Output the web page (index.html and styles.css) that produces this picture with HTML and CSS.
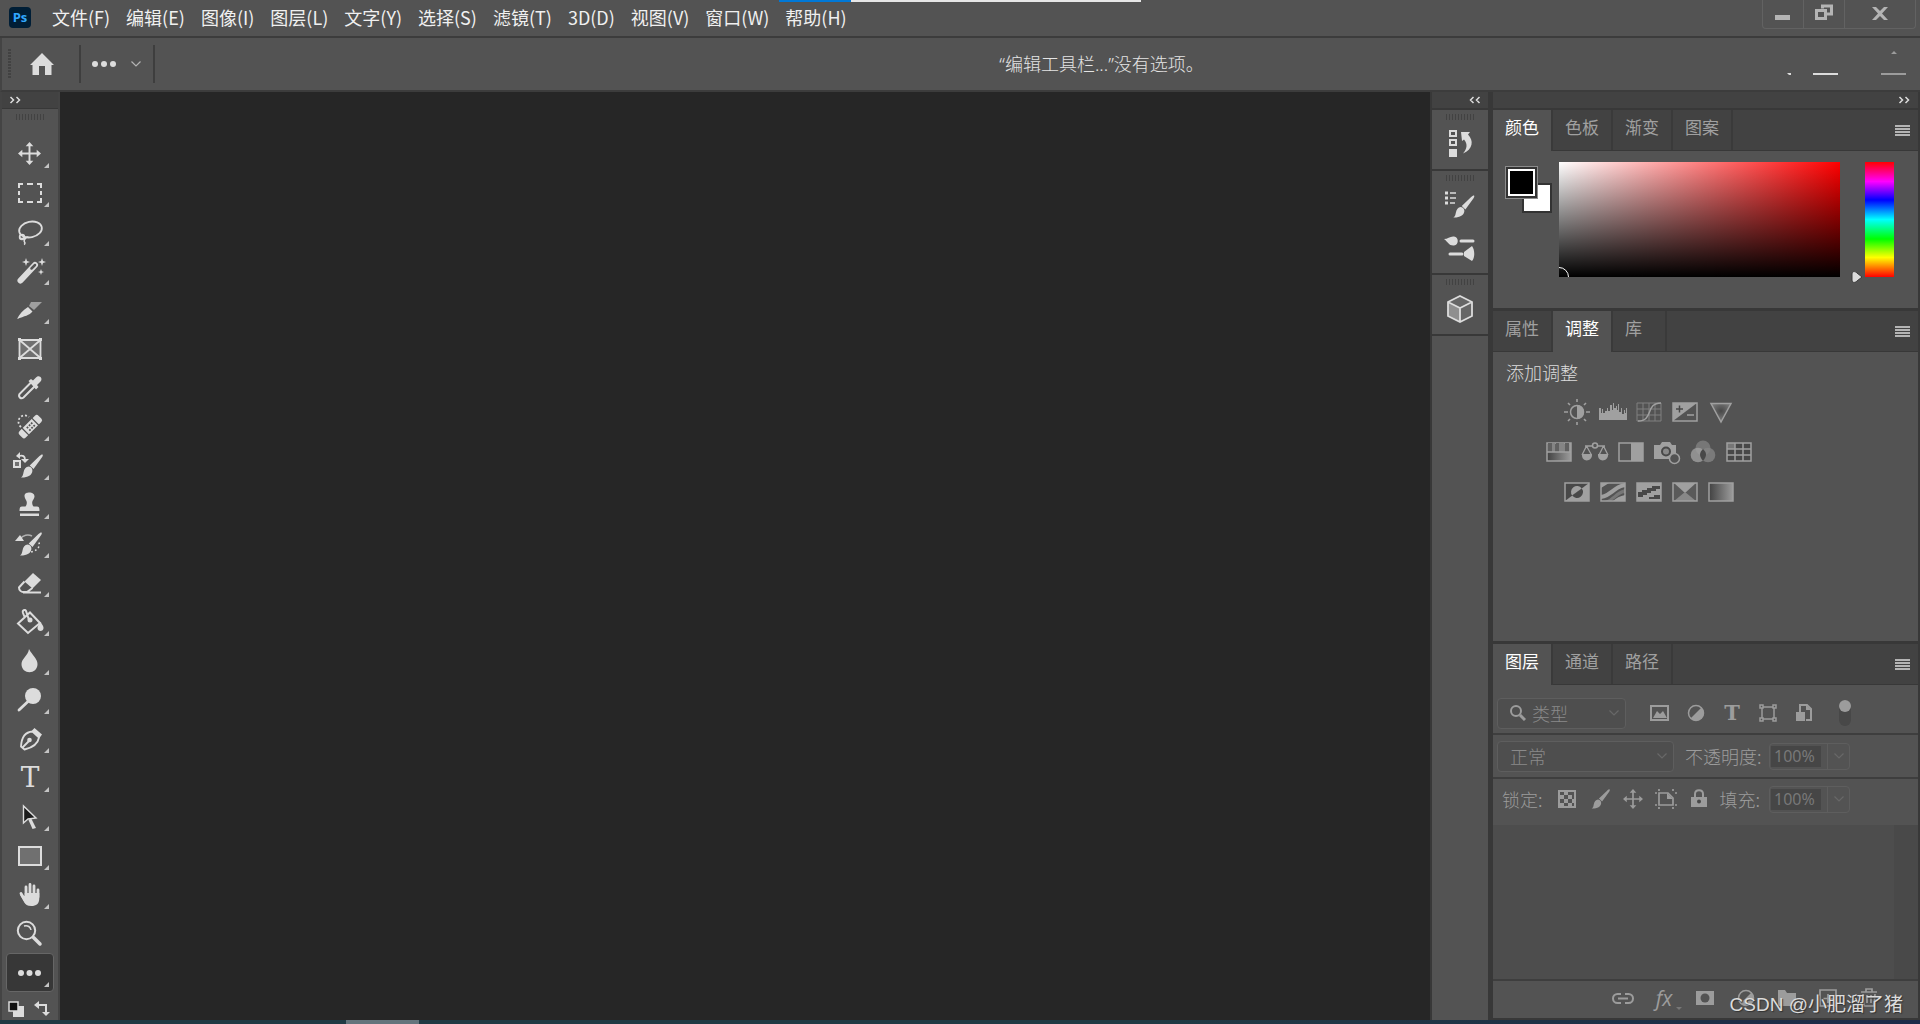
FILE: index.html
```html
<!DOCTYPE html>
<html lang="zh-CN">
<head>
    <meta charset="UTF-8">
    <meta name="viewport" content="width=device-width, initial-scale=1.0">
    <title>Photoshop</title>
    <link rel="stylesheet" href="styles.css">
</head>
<body>
    <!-- shared icons -->
    <svg class="defs" aria-hidden="true">
        <defs>
            <linearGradient id="fade"><stop offset="0" stop-color="#424242"/><stop offset="1" stop-color="#9c9c9c"/></linearGradient>
            <radialGradient id="spot" cy=".4"><stop offset="0" stop-color="#474747"/><stop offset="1" stop-color="#777"/></radialGradient>
        </defs>
        <symbol id="chevron" viewBox="0 0 12 8"><path d="M1.500 1.500L6 6l4.500-4.500" fill="none" stroke="currentColor" stroke-width="1.200"/></symbol>
        <symbol id="double" viewBox="0 0 12 8"><path d="M1.500 1L4.500 4l-3 3M7.500 1l3 3-3 3" fill="none" stroke="currentColor" stroke-width="1.500"/></symbol>
        <symbol id="menu" viewBox="0 0 16 12"><path d="M0 1h15M0 4h15M0 7h15M0 10h15" stroke="currentColor" stroke-width="2"/></symbol>
        <symbol id="move" viewBox="0 0 24 24"><path d="M12 3v18M3 12h18" stroke="currentColor" stroke-width="2"/><path d="M12 0l4 4.500H8zM12 24l4-4.500H8zM0 12l4.500-4v8zM24 12l-4.500-4v8z" fill="currentColor"/></symbol>
        <symbol id="brush" viewBox="0 0 24 24"><path d="M23.500.5c.6.4.3 1.500-.5 2.800L14.500 15l-3.800-3.500L20.500 2c1.200-1.100 2.400-1.900 3-1.500z" fill="currentColor"/><path d="M9.700 12.500c2.500.4 4 2.200 3.700 4.500-.6 4.300-4.500 6.700-11.400 6.500 2-1.200 2-2.800 2.500-5 .7-3.600 2.300-5.600 5.200-6z" fill="currentColor"/></symbol>
        <symbol id="half" viewBox="0 0 18 18"><circle cx="9" cy="9" r="7.500" fill="none" stroke="currentColor" stroke-width="1.500"/><path d="M14.500 3.500A7.700 7.700 0 013.500 14.500z" fill="currentColor"/></symbol>
    </svg>

    <header class="title-bar">
        <span class="logo">Ps</span>
        <nav class="menu">
            <a href="#">文件(F)</a>
            <a href="#">编辑(E)</a>
            <a href="#">图像(I)</a>
            <a href="#">图层(L)</a>
            <a href="#">文字(Y)</a>
            <a href="#">选择(S)</a>
            <a href="#">滤镜(T)</a>
            <a href="#">3D(D)</a>
            <a href="#">视图(V)</a>
            <a href="#">窗口(W)</a>
            <a href="#">帮助(H)</a>
        </nav>
        <div class="progress"></div>
        <div class="window-buttons">
            <button aria-label="最小化"><svg width="16" height="18"><path d="M0 11h15v5H0z" fill="currentColor"/></svg></button>
            <button aria-label="还原"><svg width="18" height="18"><path d="M7.500 4.500V2h9v8H11M1.500 6.500h9v8h-9z" fill="none" stroke="currentColor" stroke-width="3"/></svg></button>
            <button class="close" aria-label="关闭"><svg width="16" height="18"><path d="M0 3h4l4 4 4-4h4l-6 6.500 6 6.500h-4l-4-4-4 4H0l6-6.500z" fill="currentColor"/></svg></button>
        </div>
    </header>

    <div class="options-bar">
        <i class="grip-side"></i>
        <button class="home" aria-label="主页"><svg width="24" height="22"><path d="M12 0l12 12h-2.500v10H15v-9H9v9H2.500V12H0z" fill="currentColor"/></svg></button>
        <div class="tool-preset">
            <svg width="24" height="8" fill="currentColor"><circle cx="3" cy="4" r="3"/><circle cx="12" cy="4" r="3"/><circle cx="21" cy="4" r="3"/></svg>
            <svg class="muted" width="12" height="8"><use href="#chevron"/></svg>
        </div>
        <p class="no-options">“编辑工具栏...”没有选项。</p>
        <div class="bar-actions">
            <button aria-label="搜索"><svg width="6" height="28"><path d="M0 23h4v2H2z" fill="currentColor"/></svg></button>
            <button aria-label="工作区"><svg width="26" height="28"><path d="M0 24h25" stroke="currentColor" stroke-width="2"/></svg></button>
            <button class="share" aria-label="共享"><svg width="26" height="28"><path d="M13 1l3 3h-6zM0 23h25v2H0z" fill="currentColor"/></svg></button>
        </div>
    </div>

    <main class="workspace">
        <aside class="tools">
            <button class="collapse" aria-label="展开"><svg width="12" height="8"><use href="#double"/></svg></button>
            <i class="grip"></i>
            <div class="tool-list">
                <button class="tool" aria-label="移动"><svg viewBox="0 0 32 32"><use href="#move" x="4" y="4" width="23" height="23"/></svg></button>
                <button class="tool" aria-label="选框"><svg viewBox="0 0 32 32"><path d="M5 11V7h4M13 7h6M23 7h4v4M27 14v4M27 21v4h-4M19 25h-6M9 25H5v-4M5 18v-4" fill="none" stroke="currentColor" stroke-width="2"/></svg></button>
                <button class="tool" aria-label="套索"><svg viewBox="0 0 32 32" fill="none" stroke="currentColor" stroke-width="1.800"><ellipse cx="16.500" cy="13.500" rx="11.500" ry="7.800" transform="rotate(-12 16.500 13.500)"/><circle cx="8" cy="21" r="2.300"/><path d="M6 22c3 2 5-1 7-1-2 2-4 3-2.500 5 .8 1 .5 2-.5 2.500" stroke-width="1.500"/></svg></button>
                <button class="tool" aria-label="魔棒"><svg viewBox="0 0 32 32"><path d="M6.500 25.500L21 10" stroke="currentColor" stroke-width="6" stroke-linecap="round"/><path d="M17.500 13.500L21 10" stroke="#535353" stroke-width="2.500" stroke-linecap="round"/><path d="M12 3l1 3 3 1-3 1-1 3-1-3-3-1 3-1zM28 3l1 3 3 1-3 1-1 3-1-3-3-1 3-1zM27 14l.8 2.200L30 17l-2.200.8L27 20l-.8-2.200L24 17l2.200-.8z" fill="currentColor"/></svg></button>
                <button class="tool" aria-label="切片"><svg viewBox="0 0 32 32"><path d="M3 25c2.500-5 6-9 11-12l4.500 4.500c-3 4-8 4.500-15.500 7.500z" fill="currentColor"/><path d="M17 8h11l-8 8-5-4z" fill="#a0a0a0"/></svg></button>
                <button class="tool single" aria-label="图框"><svg viewBox="0 0 32 32"><path d="M5.500 7h21v18h-21zM5.500 7l21 18M26.500 7l-21 18" fill="#707070" stroke="currentColor" stroke-width="1.800"/><path d="M4 5h3v3H4zM25 5h3v3h-3zM4 24h3v3H4zM25 24h3v3h-3z" fill="currentColor"/></svg></button>
                <button class="tool" aria-label="吸管"><svg viewBox="0 0 32 32"><path d="M17 10.500L5.500 22c-1.500 3 1.500 5.500 4 3.500L21 14" fill="none" stroke="currentColor" stroke-width="2"/><path d="M14.500 9l2.500-2 2 1.500 3-3c3-3.500 7.500.5 4.500 4l-3.500 3.500 1.500 2-2.500 2.500z" fill="currentColor"/></svg></button>
                <button class="tool" aria-label="修复画笔"><svg viewBox="0 0 32 32"><path d="M7 16C0 9 9 1 15 6" fill="none" stroke="currentColor" stroke-width="1.800" stroke-dasharray="2 2"/><g transform="rotate(-45 16 16)"><rect x="3" y="11.500" width="27" height="9" rx="2.500" fill="currentColor"/><path d="M9.500 11v10M23.500 11v10" stroke="#535353" stroke-width="1.300"/><path d="M13 14.500h1.800M16 14.500h1.800M19 14.500h1.800M13 18h1.800M16 18h1.800M19 18h1.800" stroke="#535353" stroke-width="1.800"/></g></svg></button>
                <button class="tool" aria-label="颜色替换"><svg viewBox="0 0 32 32"><use href="#brush" x="5" y="4" width="24" height="24"/><path d="M0 11h6v6H0z" fill="#707070" stroke="currentColor" stroke-width="2"/><path d="M5 6c4-1 6 0 6 4" fill="none" stroke="currentColor" stroke-width="1.800"/><path d="M2 6l4-4v7zM7 9h8l-4 4z" fill="currentColor"/></svg></button>
                <button class="tool" aria-label="仿制图章"><svg viewBox="0 0 32 32" fill="currentColor"><path d="M12.500 12C8 5 12 3.500 15.500 3.500S23 6 18.500 12c-.8 2 0 4.500 1 5.500H23c2 0 2.500 1.500 2.500 4.500h-20c0-3 .5-4.500 2.500-4.500h3.500c1-1 1.800-3.500 1-5.500zM6 24.500h19V27H6z"/></svg></button>
                <button class="tool" aria-label="历史记录画笔"><svg viewBox="0 0 32 32"><use href="#brush" x="4" y="4" width="24" height="24"/><path d="M6 11c3-4 8-5 12-3" fill="none" stroke="#b0b0b0" stroke-width="1.500"/><path d="M1 13h9L6 7z" fill="currentColor"/><path d="M25 14.500c1 4-1 8-8 9.500" fill="none" stroke="currentColor" stroke-width="1.600" stroke-dasharray="1.600 2.500"/></svg></button>
                <button class="tool" aria-label="橡皮擦"><svg viewBox="0 0 32 32"><path d="M19 6l8 7-8.500 8.500-8-7z" fill="currentColor"/><path d="M10.500 14.500L5 20.500c0 3 2.500 4.500 4 4.500h4l5.500-4M9 25.500h18" fill="none" stroke="currentColor" stroke-width="2"/></svg></button>
                <button class="tool" aria-label="油漆桶"><svg viewBox="0 0 32 32"><path d="M16 6.500L26 17 14 27 4 17.500zM15 14L12 5c-1-2-4-1-3 2l2 5" fill="none" stroke="currentColor" stroke-width="2"/><circle cx="16" cy="14" r="2.500" fill="currentColor"/><path d="M26.500 16c2 3 3 4.500 3 6 0 4-6 4-6 0 0-1.500 1-3 3-6z" fill="currentColor"/></svg></button>
                <button class="tool" aria-label="模糊"><svg viewBox="0 0 32 32"><path d="M15 4c3 6 8.500 9.500 8.500 15 0 11-16 11-16 0C7.500 13.500 14 11 15 4z" fill="currentColor"/></svg></button>
                <button class="tool" aria-label="减淡"><svg viewBox="0 0 32 32"><circle cx="19" cy="12" r="8" fill="currentColor"/><path d="M14 17.500L5 26" stroke="currentColor" stroke-width="2.800" stroke-linecap="round"/></svg></button>
                <button class="tool" aria-label="钢笔"><svg viewBox="0 0 32 32"><path d="M18.500 8.500l6.500 6c-1 6-6 10-14.500 12L7 23.500C7.500 15 11 9 18.500 8.500zM8 25l7-7" fill="none" stroke="currentColor" stroke-width="1.800"/><circle cx="15.500" cy="17" r="2.300" fill="currentColor"/><path d="M18 7.500L20.500 5 28 11.500 25.500 15z" fill="currentColor"/></svg></button>
                <button class="tool" aria-label="文字"><span class="type-icon">T</span></button>
                <button class="tool" aria-label="路径选择"><svg viewBox="0 0 32 32"><path d="M17 17l5 10-3.500 1-4-9z" fill="currentColor"/><path d="M9.500 5v17l4.500-4 8-1z" fill="#1b1b1b" stroke="currentColor" stroke-width="1.400"/></svg></button>
                <button class="tool" aria-label="矩形"><svg viewBox="0 0 32 32"><path d="M5 7h22v18H5z" fill="#707070" stroke="currentColor" stroke-width="2"/></svg></button>
                <button class="tool" aria-label="抓手"><svg viewBox="0 0 32 32"><path d="M12 17V8M16 16V5.500M20 17V7M24 18v-7M12 23l-5-8.500" stroke="currentColor" stroke-width="2.800" stroke-linecap="round"/><path d="M10.700 14h14.600v5c0 6-3 8-8 8-4 0-6-1.500-7.500-4.500L6 16l4.700 1z" fill="currentColor"/></svg></button>
                <button class="tool single" aria-label="缩放"><svg viewBox="0 0 32 32" fill="none" stroke="currentColor"><circle cx="12.500" cy="12.500" r="8.700" stroke-width="2"/><path d="M10 8c4-1 6.500 1 7 4" stroke-width="1.500"/><path d="M19.500 19.500L26 26" stroke-width="3.500" stroke-linecap="round"/></svg></button>
                <button class="tool active" aria-label="编辑工具栏"><svg viewBox="0 0 32 32" fill="currentColor"><circle cx="7" cy="16" r="3"/><circle cx="15.500" cy="16" r="3"/><circle cx="24" cy="16" r="3"/></svg></button>
            </div>
            <div class="mini-colors">
                <svg width="16" height="16"><path d="M5 5h11v11H5z" fill="#dcdcdc"/><path d="M1 1h9v9H1z" fill="#111" stroke="#dcdcdc" stroke-width="1.500"/></svg>
                <svg width="16" height="16"><path d="M4 4h8v9" fill="none" stroke="currentColor" stroke-width="2"/><path d="M0 4l5-4v8zM8 11h8l-4 4z" fill="currentColor"/></svg>
            </div>
        </aside>

        <section class="canvas"></section>

        <aside class="dock">
            <button class="collapse" aria-label="展开面板"><svg class="flip" width="12" height="8"><use href="#double"/></svg></button>
            <div class="dock-group">
                <i class="grip"></i>
                <button aria-label="历史记录"><svg viewBox="0 0 32 32"><path d="M6 3h6v5H6zM6 12h6v5H6z" fill="none" stroke="currentColor" stroke-width="2"/><path d="M5 21h8v8H5zM17 4h9l-2 2.500c6 6 5 15-5 19 4-5 5-9 1-14L18 13z" fill="currentColor"/></svg></button>
            </div>
            <div class="dock-group">
                <i class="grip"></i>
                <button aria-label="画笔设置"><svg viewBox="0 0 32 32"><path d="M1 4h3M1 9h3M1 14h3" stroke="currentColor" stroke-width="3"/><path d="M6 4h6M6 9h6M6 14h5" stroke="currentColor" stroke-width="1.500"/><use href="#brush" x="6" y="6" width="26" height="23"/></svg></button>
                <button aria-label="画笔"><svg viewBox="0 0 32 32"><path d="M17 9h12M6 22h12" stroke="currentColor" stroke-width="3" stroke-linecap="round"/><path d="M0 7c4 0 6-3 10-2.500 5 .5 5 8.500 0 9C5 14 4 10 0 7zM20 20l8-6c3 4 3 12 0 15l-8-5z" fill="currentColor"/></svg></button>
            </div>
            <div class="dock-group">
                <i class="grip"></i>
                <button aria-label="3D"><svg viewBox="0 0 32 32"><path d="M16 3l12 6v14l-12 6-12-6V9z" fill="#666"/><path d="M4 9l12 6v14L4 23z" fill="#8f8f8f"/><path d="M16 3l12 6v14l-12 6-12-6V9zM4 9l12 6 12-6M16 15v14" fill="none" stroke="currentColor" stroke-width="1.800"/></svg></button>
            </div>
            <div class="dock-rest"></div>
        </aside>

        <aside class="panels">
            <button class="collapse" aria-label="折叠面板"><svg width="12" height="8"><use href="#double"/></svg></button>

            <section class="panel color-panel">
                <div class="tabs">
                    <button class="tab selected">颜色</button>
                    <button class="tab">色板</button>
                    <button class="tab">渐变</button>
                    <button class="tab">图案</button>
                    <button class="panel-menu" aria-label="面板菜单"><svg width="16" height="12"><use href="#menu"/></svg></button>
                </div>
                <div class="color-body">
                    <div class="swatches">
                        <button class="back" aria-label="背景色"></button>
                        <button class="fore" aria-label="前景色"></button>
                    </div>
                    <div class="spectrum"><i class="picker"></i></div>
                    <div class="hue"><svg class="hue-arrow" width="12" height="12"><path d="M1 3c0-3 3-3 5-1l5 4-5 4c-2 2-5 2-5-1z" fill="#dcdcdc" stroke="#3a3a3a"/></svg></div>
                </div>
            </section>

            <section class="panel adjust-panel">
                <div class="tabs">
                    <button class="tab">属性</button>
                    <button class="tab selected">调整</button>
                    <button class="tab short">库</button>
                    <button class="panel-menu" aria-label="面板菜单"><svg width="16" height="12"><use href="#menu"/></svg></button>
                </div>
                <div class="adjust-body">
                    <h2>添加调整</h2>
                    <div class="adjustments">
                        <div class="adjust-row">
                            <button aria-label="亮度/对比度"><svg viewBox="0 0 28 28"><circle cx="14" cy="14" r="6.500" fill="none" stroke="currentColor" stroke-width="1.500"/><path d="M14 7a7 7 0 010 14z" fill="currentColor"/><path d="M14 1v3M14 24v3M1 14h4M23 14h4M5 5l2 2M21 21l2 2M5 23l2-2M21 7l2-2" stroke="currentColor" stroke-width="1.600"/></svg></button>
                            <button aria-label="色阶"><svg viewBox="0 0 28 28"><path d="M0 22V10h2v5h1v-4h1v4h2v-2h2v-3h1v3h2V7h2v5h1V5h1v5h2V8h1v4h1V6h1v8h2v-4h1v6h2v-4h1v3h1v-5h1v12z" fill="currentColor"/></svg></button>
                            <button aria-label="曲线"><svg viewBox="0 0 28 28" fill="none"><path d="M2 5h24v18H2zM8 5v18M14 5v18M20 5v18M2 11h24M2 17h24" stroke="#808080"/><path d="M3 23c16 0 7-18 23-18" stroke="currentColor" stroke-width="1.500"/></svg></button>
                            <button aria-label="曝光度"><svg viewBox="0 0 28 28"><path d="M2 5h24v18H2z" fill="none" stroke="currentColor" stroke-width="1.500"/><path d="M2 5h24L2 23z" fill="currentColor"/><path d="M5 11h7M8.500 7.500v7" stroke="#484848" stroke-width="1.500"/><path d="M16 17h7" stroke="currentColor" stroke-width="1.500"/></svg></button>
                            <button aria-label="自然饱和度"><svg viewBox="0 0 28 28"><path d="M4 5.500h20L14 24z" fill="url(#spot)" stroke="currentColor" stroke-width="1.500"/></svg></button>
                        </div>
                        <div class="adjust-row">
                            <button aria-label="色相/饱和度"><svg viewBox="0 0 28 28"><path d="M2 5h24v18H2z" fill="url(#fade)" stroke="currentColor" stroke-width="1.500"/><path d="M3 5h4v9H3zM11 5h3v9h-3zM20 5h4v9h-4z" fill="#606060"/><path d="M7 5h3v9H7zM14 5h5v9h-5z" fill="#858585"/><path d="M2 14h24" stroke="currentColor" stroke-width="1.500"/></svg></button>
                            <button aria-label="色彩平衡"><svg viewBox="0 0 28 28"><path d="M4 8h20M5.500 8L1 17M5.500 8l5 9M22.500 8L18 17M22.500 8l4.500 9" fill="none" stroke="currentColor" stroke-width="1.300"/><path d="M1 16h10c1 8-11 9-10 0zM17 16h10c1 8-11 9-10 0z" fill="currentColor"/><circle cx="14" cy="7.500" r="2.500" fill="#535353" stroke="currentColor" stroke-width="1.500"/></svg></button>
                            <button aria-label="黑白"><svg viewBox="0 0 28 28"><path d="M2 5h24v18H2z" fill="none" stroke="currentColor" stroke-width="1.500"/><path d="M14 5h12v18H14z" fill="currentColor"/></svg></button>
                            <button aria-label="照片滤镜"><svg viewBox="0 0 28 28"><path d="M1 7h6l2-3h8l2 3h4v14H1z" fill="currentColor"/><circle cx="13" cy="13.500" r="4" fill="#888" stroke="#484848" stroke-width="2"/><circle cx="21.500" cy="20.500" r="5" fill="#535353" stroke="currentColor" stroke-width="1.500"/></svg></button>
                            <button aria-label="通道混合器"><svg viewBox="0 0 28 28"><circle cx="14" cy="10" r="7.500" fill="#777"/><circle cx="9" cy="17" r="7.300" fill="#a0a0a0" fill-opacity=".8"/><circle cx="19" cy="17" r="7.300" fill="#858585" fill-opacity=".8"/><path d="M14 11c4 4 4 7 0 12-4-5-4-8 0-12z" fill="#484848"/></svg></button>
                            <button aria-label="颜色查找"><svg viewBox="0 0 28 28"><path d="M2 5h24v18H2z" fill="#484848"/><path d="M2 5h8v6H2z" fill="#777"/><path d="M2 5h24v18H2zM10 5v18M18 5v18M2 11h24M2 17h24" fill="none" stroke="currentColor" stroke-width="1.500"/></svg></button>
                        </div>
                        <div class="adjust-row">
                            <button aria-label="反相"><svg viewBox="0 0 28 28"><path d="M2 5h24v18H2z" fill="#484848" stroke="currentColor" stroke-width="1.500"/><path d="M26 5v18H2z" fill="currentColor"/><path d="M9.200 17.600A6 6 0 1118.800 10.400z" fill="currentColor"/><path d="M9.200 17.600A6 6 0 0018.800 10.400z" fill="#484848"/></svg></button>
                            <button aria-label="色调分离"><svg viewBox="0 0 28 28"><path d="M2 5h24v18H2z" fill="#535353"/><path d="M2 5h8l-8 5zM2 17C10 16 14 7 26 5v4C16 11 12 20 2 21zM14 23c3-3 7-5 12-6v6z" fill="#a0a0a0"/><path d="M6 23c7-2 10-9 20-12v4c-7 1-9 6-14 8z" fill="#777"/><path d="M2 5h24v18H2z" fill="none" stroke="currentColor" stroke-width="1.500"/></svg></button>
                            <button aria-label="阈值"><svg viewBox="0 0 28 28"><path d="M2 5h24v18H2z" fill="currentColor" stroke="currentColor" stroke-width="1.500"/><path d="M3 14h4v-2h5v-2h5V8h8v3h-4v2h-5v2h-4v2H8v2H3zM14 21v-2h5v-2h6v4z" fill="#484848"/></svg></button>
                            <button aria-label="可选颜色"><svg viewBox="0 0 28 28"><path d="M2 5h24v18H2z" fill="#5a5a5a"/><path d="M3 5h22L14 15z" fill="#a0a0a0"/><path d="M3 23h22L14 14z" fill="#888"/><path d="M2 5h24v18H2z" fill="none" stroke="currentColor" stroke-width="1.500"/></svg></button>
                            <button aria-label="渐变映射"><svg viewBox="0 0 28 28"><path d="M2 5h24v18H2z" fill="url(#fade)" stroke="currentColor" stroke-width="1.500"/></svg></button>
                        </div>
                    </div>
                </div>
            </section>

            <section class="panel layers-panel">
                <div class="tabs">
                    <button class="tab selected">图层</button>
                    <button class="tab">通道</button>
                    <button class="tab">路径</button>
                    <button class="panel-menu" aria-label="面板菜单"><svg width="16" height="12"><use href="#menu"/></svg></button>
                </div>
                <div class="row filter-row">
                    <div class="select-box type-box">
                        <svg class="lens" width="16" height="16" fill="none" stroke="currentColor"><circle cx="6" cy="6" r="5" stroke-width="2"/><path d="M10 10l5 5" stroke-width="3"/></svg>
                        <select aria-label="过滤类型" disabled><option>类型</option></select>
                        <svg width="12" height="8"><use href="#chevron"/></svg>
                    </div>
                    <div class="filters">
                        <button disabled aria-label="像素图层"><svg viewBox="0 0 20 20"><path d="M1 3h17v14H1z" fill="none" stroke="currentColor" stroke-width="2"/><path d="M3 15l4-7 3 3 3-3 4 7z" fill="currentColor"/></svg></button>
                        <button disabled aria-label="调整图层"><svg viewBox="0 0 20 20"><use href="#half" x="1" y="1" width="18" height="18"/></svg></button>
                        <button disabled aria-label="文字图层"><span class="type-icon small">T</span></button>
                        <button disabled aria-label="形状图层"><svg viewBox="0 0 20 20" fill="none" stroke="currentColor"><path d="M4 5v10M16 5v10M5 4h10M5 16h10" stroke-width="1.500"/><path d="M2 2h3v3H2zM15 2h3v3h-3zM2 15h3v3H2zM15 15h3v3h-3z" stroke-width="1.500"/></svg></button>
                        <button disabled aria-label="智能对象"><svg viewBox="0 0 20 20"><path d="M6 9V2h7l4 4v11h-5" fill="none" stroke="currentColor" stroke-width="2"/><path d="M12 2v5h5zM2 9h9v9H2z" fill="currentColor"/></svg></button>
                    </div>
                    <button class="filter-switch" disabled aria-label="过滤开关"></button>
                </div>
                <div class="row blend-row">
                    <div class="select-box blend-box">
                        <select aria-label="混合模式" disabled><option>正常</option></select>
                        <svg width="12" height="8"><use href="#chevron"/></svg>
                    </div>
                    <label for="opacity">不透明度:</label>
                    <div class="number-box">
                        <input id="opacity" type="text" value="100%" disabled>
                        <button disabled aria-label="不透明度滑块"><svg width="12" height="8"><use href="#chevron"/></svg></button>
                    </div>
                </div>
                <div class="row lock-row">
                    <span class="lock-label">锁定:</span>
                    <div class="locks">
                        <button disabled aria-label="锁定透明像素"><svg viewBox="0 0 20 20"><path d="M2 2h16v16H2z" fill="none" stroke="currentColor" stroke-width="2"/><path d="M7 2h4v4H7zM2 6h5v4H2zM11 6h4v4h-4zM7 10h4v4H7zM15 10h3v4h-3zM11 14h4v4h-4zM3 14h4v4H3z" fill="currentColor"/></svg></button>
                        <button disabled aria-label="锁定图像像素"><svg viewBox="0 0 20 20"><use href="#brush" width="20" height="20"/></svg></button>
                        <button disabled aria-label="锁定位置"><svg viewBox="0 0 20 20"><use href="#move" width="20" height="20"/></svg></button>
                        <button disabled aria-label="防止自动嵌套"><svg viewBox="0 0 20 20"><path d="M3 0v2M17 0v2M3 18v2M17 18v2M-1 4h2M19 4h2M-1 16h2M19 16h2M3 4v12h14V9l-5-5z" fill="none" stroke="currentColor" stroke-width="1.700"/><path d="M11 4v6h6z" fill="currentColor"/></svg></button>
                        <button disabled aria-label="锁定全部"><svg viewBox="0 0 20 20"><path d="M6 9V5c0-5 8-5 8 0v4" fill="none" stroke="currentColor" stroke-width="2"/><path d="M2 8h16v10H2z" fill="currentColor"/><circle cx="10" cy="12.500" r="2" fill="#484848"/></svg></button>
                    </div>
                    <label for="fill">填充:</label>
                    <div class="number-box">
                        <input id="fill" type="text" value="100%" disabled>
                        <button disabled aria-label="填充滑块"><svg width="12" height="8"><use href="#chevron"/></svg></button>
                    </div>
                </div>
                <div class="layer-list"></div>
                <div class="layer-actions">
                    <button disabled aria-label="链接图层"><svg viewBox="0 0 24 24" fill="none" stroke="currentColor" stroke-width="2"><path d="M10 8H6.500a4.500 4.500 0 000 9H10M14 8h3.500a4.500 4.500 0 010 9H14M7 12.500h10"/></svg></button>
                    <button disabled class="fx" aria-label="图层样式">fx</button>
                    <button disabled aria-label="添加蒙版"><svg viewBox="0 0 24 24"><path d="M3 5h18v14H3z" fill="currentColor"/><circle cx="12" cy="12" r="4.500" fill="#535353"/></svg></button>
                    <button disabled aria-label="新建调整图层"><svg viewBox="0 0 24 24"><use href="#half" x="3" y="3" width="18" height="18"/></svg></button>
                    <button disabled aria-label="新建组"><svg viewBox="0 0 24 24"><path d="M3 4h7l2 3h9v13H3z" fill="currentColor"/></svg></button>
                    <button disabled aria-label="新建图层"><svg viewBox="0 0 24 24" fill="none" stroke="currentColor"><path d="M4 4h16v16H4zM12 8v9M7.500 12.500h9" stroke-width="1.700"/></svg></button>
                    <button disabled aria-label="删除图层"><svg viewBox="0 0 24 24" fill="none" stroke="currentColor" stroke-width="1.700"><path d="M4 6h16M9 6V3h6v3M6 8l1 12h10l1-12M10 9v8M14 9v8"/></svg></button>
                    <span class="watermark">CSDN @小肥溜了猪</span>
                </div>
            </section>
        </aside>
    </main>
    <footer class="desktop-edge"><i></i></footer>
</body>
</html>
```

FILE: styles.css
```css
* { box-sizing: border-box; }
body { margin: 0; height: 100vh; display: flex; flex-direction: column; overflow: hidden; background: #535353; color: #dcdcdc; font-family: "Noto Sans CJK SC", sans-serif; font-size: 17px; }
button, select, input { font: inherit; color: inherit; background: none; border: none; padding: 0; margin: 0; }
button { display: flex; align-items: center; justify-content: center; }
svg { display: block; flex: none; overflow: visible; }
p, h2 { margin: 0; font-weight: 300; }
.defs { position: absolute; width: 0; height: 0; }

/* title bar */
.title-bar { position: relative; flex: none; display: flex; height: 38px; padding-left: 9px; border-bottom: 2px solid #3c3c3c; }
.logo { width: 22px; height: 21px; margin-top: 7px; border-radius: 4px; background: #001e36; color: #31a8ff; font: bold 13px/20px "Open Sans", sans-serif; text-align: center; }
.menu { display: flex; gap: 16px; margin-left: 21px; font-size: 18px; line-height: 34px; }
.menu a { color: #f0f0f0; text-decoration: none; white-space: nowrap; }
.progress { position: absolute; top: 0; left: 779px; width: 362px; height: 2px; background: linear-gradient(90deg, #0078d7 72px, #e6e6e6 72px); }
.window-buttons { display: flex; height: 29px; margin: 0 4px 0 auto; border: 1px solid #626262; border-top: none; border-radius: 0 0 4px 4px; color: #b4b4b4; }
.window-buttons button { width: 41px; padding-bottom: 2px; border-right: 1px solid #626262; }
.window-buttons .close { width: 70px; border-right: none; }

/* options bar */
.options-bar { position: relative; flex: none; display: flex; align-items: center; height: 54px; padding: 0 13px 0 6px; border-bottom: 2px solid #3c3c3c; border-left: 2px solid #444; }
.grip-side { width: 3px; height: 30px; background: repeating-linear-gradient(#424242 0 2px, #535353 2px 3px); }
.home { width: 24px; margin: 0 25px 0 19px; }
.tool-preset { display: flex; align-items: center; gap: 14px; height: 38px; padding: 0 11px; border: solid #3e3e3e; border-width: 0 2px; }
.muted { color: #b4b4b4; }
.no-options { position: absolute; left: 52%; font-size: 18px; line-height: 24px; color: #e4e4e4; font-family: "Noto Sans", "Noto Sans CJK SC", sans-serif; white-space: nowrap; }
.bar-actions { display: flex; gap: 20px; margin-left: auto; }
.bar-actions .share { margin-left: 22px; color: #9c9c9c; }

/* workspace */
.workspace { flex: 1; display: flex; min-height: 0; background: #383838; }
.collapse { flex: none; width: 100%; height: 16px; background: #424242; }
.flip { transform: scaleX(-1); }
.grip { display: block; flex: none; width: 29px; height: 6px; margin: 5px auto 0; background: repeating-linear-gradient(90deg, #424242 0 1px, #535353 1px 3px); }

.tools { flex: none; display: flex; flex-direction: column; width: 60px; border: solid #444; border-width: 0 2px; background: #535353; }
.tools .collapse { justify-content: flex-start; height: 17px; padding-left: 7px; border-bottom: 1px solid #383838; }
.tool-list { display: flex; flex-direction: column; align-items: center; margin-top: 14px; }
.tool { position: relative; width: 48px; height: 39px; border: 1px solid transparent; }
.tool svg { width: 32px; height: 32px; }
.tool::after { content: ""; position: absolute; right: 4px; bottom: 4px; border: solid; border-width: 0 0 5px 5px; border-color: transparent transparent #c4c4c4; }
.tool.single::after { display: none; }
.tool.active { background: #373737; border-color: #666; border-radius: 4px; }
.type-icon { font: 28px/30px "DejaVu Serif", serif; }
.type-icon.small { font: bold 21px/20px "DejaVu Serif", serif; }
.mini-colors { display: flex; gap: 10px; padding: 9px 6px; }

.canvas { flex: 1; background: #262626; border-right: 2px solid #383838; }

/* collapsed panel icons */
.dock { flex: none; display: flex; flex-direction: column; gap: 2px; width: 58px; padding-right: 2px; }
.dock .collapse { padding-left: 30px; }
.dock-group { padding: 4px 0; background: #535353; }
.dock-group button { width: 100%; height: 43px; }
.dock-group .grip { margin: 0 auto 2px; }
.dock-group svg { width: 32px; height: 32px; }
.dock-rest { flex: 1; background: #535353; }

/* panels */
.panels { flex: none; display: flex; flex-direction: column; width: 430px; padding: 0 2px 2px 3px; }
.panels .collapse { justify-content: flex-end; padding-right: 8px; margin-bottom: 2px; }
.panel { background: #535353; margin-bottom: 3px; }
.tabs { display: flex; height: 41px; background: #424242; border-bottom: 1px solid #383838; }
.tab { align-items: flex-start; width: 60px; border-right: 2px solid #3a3a3a; color: #a0a0a0; line-height: 34px; }
.tab.selected { height: 41px; background: #535353; color: #fff; }
.tab.short { width: 54px; justify-content: flex-start; padding-left: 12px; }
.panel-menu { margin: 2px 7px 0 auto; color: #b4b4b4; }

.color-body { display: flex; height: 157px; padding: 11px 24px 31px 13px; }
.swatches { position: relative; width: 53px; }
.swatches button { position: absolute; border: 2px solid #333; }
.swatches .fore { top: 7px; left: 2px; width: 27px; height: 27px; background: #000; border: 2px solid #fff; outline: 2px solid #333; box-shadow: 0 0 0 3px #8c8c8c; }
.swatches .back { top: 21px; left: 16px; width: 30px; height: 30px; background: #fff; }
.spectrum { position: relative; flex: 1; overflow: hidden; background: linear-gradient(transparent, #000), linear-gradient(90deg, #fff, #f00); }
.picker { position: absolute; left: -10px; bottom: -10px; width: 20px; height: 20px; border: 1px solid #fff; border-radius: 50%; }
.hue { position: relative; width: 29px; margin-left: 25px; background: linear-gradient(#f00, #f0f 17%, #00f 33%, #0ff 50%, #0f0 67%, #ff0 83%, #f00); }
.hue-arrow { position: absolute; left: -14px; bottom: -6px; }

.adjust-body { height: 289px; padding: 7px 13px; }
.adjust-body h2 { font-size: 18px; line-height: 26px; }
.adjustments { display: flex; flex-direction: column; gap: 12px; width: 216px; margin: 13px 35px; color: #a0a0a0; }
.adjust-row { display: flex; justify-content: center; gap: 8px; }
.adjust-row svg { width: 28px; height: 28px; }

.layers-panel { flex: 1; display: flex; flex-direction: column; min-height: 0; color: #9c9c9c; margin: 0; }
.layers-panel .tabs { flex: none; }
.row { flex: none; display: flex; align-items: center; height: 44px; padding: 0 4px; border-bottom: 2px solid #3e3e3e; font-size: 18px; font-weight: 300; white-space: nowrap; }
.select-box { display: flex; align-items: center; height: 31px; padding: 0 5px 0 12px; border: 1px solid #5e5e5e; border-radius: 4px; background: #4e4e4e; color: #8a8a8a; }
.select-box select { flex: 1; min-width: 0; appearance: none; opacity: 1; }
.select-box > svg:last-child, .number-box svg { color: #686868; }
.filter-row { height: 50px; padding-top: 8px; }
.type-box { width: 129px; }
.lens { margin-right: 6px; color: #9c9c9c; }
.filters { display: flex; gap: 16px; margin: 0 25px 0 24px; }
.filters svg, .locks svg { width: 20px; height: 20px; }
.filters button, .locks button { width: 20px; height: 20px; }
.filter-switch { position: relative; width: 12px; height: 26px; border-radius: 6px; background: #484848; }
.filter-switch::before { content: ""; position: absolute; top: 0; width: 12px; height: 12px; border-radius: 50%; background: #9c9c9c; }
.blend-box { width: 177px; margin-right: 11px; }
.number-box { display: flex; width: 81px; height: 27px; border: 1px solid #5e5e5e; border-radius: 4px; }
.row .number-box { margin: 0 64px 0 auto; }
.number-box input { width: 50px; margin: 2px 6px 2px 1px; padding-left: 3px; background: #464646; color: #787878; font: 16px "Noto Sans", sans-serif; }
.number-box button { flex: 1; border-left: 1px solid #5e5e5e; }
.lock-row { height: 46px; padding: 0 4px 6px 9px; border-bottom: none; }
.locks { display: flex; gap: 13px; margin: 0 11px 0 14px; }
.layer-list { flex: 1; background: linear-gradient(90deg, #4d4d4d calc(100% - 24px), #494949 0); border-bottom: 2px solid #3e3e3e; }
.layer-actions { position: relative; flex: none; display: flex; justify-content: flex-end; gap: 17px; height: 37px; padding: 5px 37px 0 0; }
.layer-actions button { width: 24px; height: 24px; }
.layer-actions svg { width: 24px; height: 24px; }
.layer-actions .fx { position: relative; font: italic 21px/24px "Open Sans", sans-serif; }
.fx::after { content: ""; position: absolute; right: -6px; bottom: 0; border: solid transparent; border-width: 3px 3px 0; border-top-color: #777; }
.watermark { position: absolute; right: 15px; bottom: 0; font: 19px/26px "Liberation Sans", "Noto Sans CJK SC", sans-serif; color: #dcdcdc; text-shadow: 1px 1px 1px #333; white-space: nowrap; }

.desktop-edge { flex: none; height: 4px; background: linear-gradient(90deg, #203a44 60%, #1c2a48); }
.desktop-edge i { display: block; width: 73px; height: 4px; margin-left: 346px; background: #64747c; }
```
